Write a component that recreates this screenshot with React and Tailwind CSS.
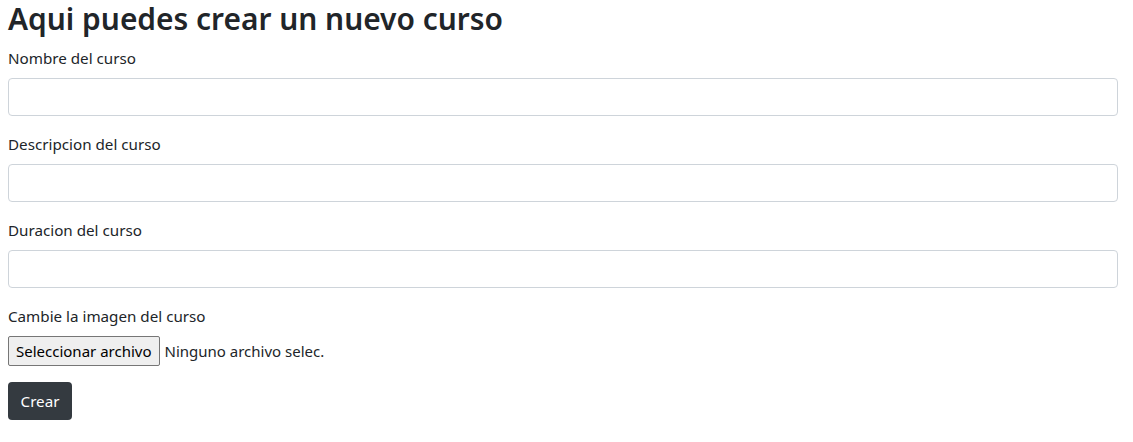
import React, { useState } from "react";

const font = { fontFamily: '"Noto Sans", "Segoe UI", Roboto, sans-serif' };

const Field = ({ label, value, onChange }) => (
  <div className="mb-4">
    <label className="block mb-2 text-[15.2px] leading-6 text-[#212529]">{label}</label>
    <input
      type="text"
      value={value}
      onChange={onChange}
      className="block w-full h-[38px] px-3 py-1.5 text-[15.2px] text-[#495057] bg-white border border-[#ced4da] rounded-[4px] focus:outline-none"
    />
  </div>
);

const App = () => {
  const [nombre, setNombre] = useState("");
  const [descripcion, setDescripcion] = useState("");
  const [duracion, setDuracion] = useState("");

  return (
    <div className="min-h-screen bg-white px-2 pr-[15px] text-[#212529]" style={font}>
      <h2 className="text-[29.9px] leading-[38px] font-semibold mb-2">Aqui puedes crear un nuevo curso</h2>
      <form onSubmit={(e) => e.preventDefault()}>
        <Field label="Nombre del curso" value={nombre} onChange={(e) => setNombre(e.target.value)} />
        <Field label="Descripcion del curso" value={descripcion} onChange={(e) => setDescripcion(e.target.value)} />
        <Field label="Duracion del curso" value={duracion} onChange={(e) => setDuracion(e.target.value)} />
        <div className="mb-4">
          <label className="block mb-2 text-[15.2px] leading-6">Cambie la imagen del curso</label>
          <div className="flex items-center h-[30px]">
            <span className="inline-flex items-center h-[30px] px-[7px] bg-[#efefef] border border-[#767676] rounded-[2px] text-[15px] text-black">
              Seleccionar archivo
            </span>
            <span className="ml-[5px] text-[15px]">Ninguno archivo selec.</span>
          </div>
        </div>
        <button
          type="submit"
          className="h-[38px] w-[64px] bg-[#343a40] text-white text-[15.2px] rounded-[4px]"
        >
          Crear
        </button>
      </form>
    </div>
  );
};

export default App;
